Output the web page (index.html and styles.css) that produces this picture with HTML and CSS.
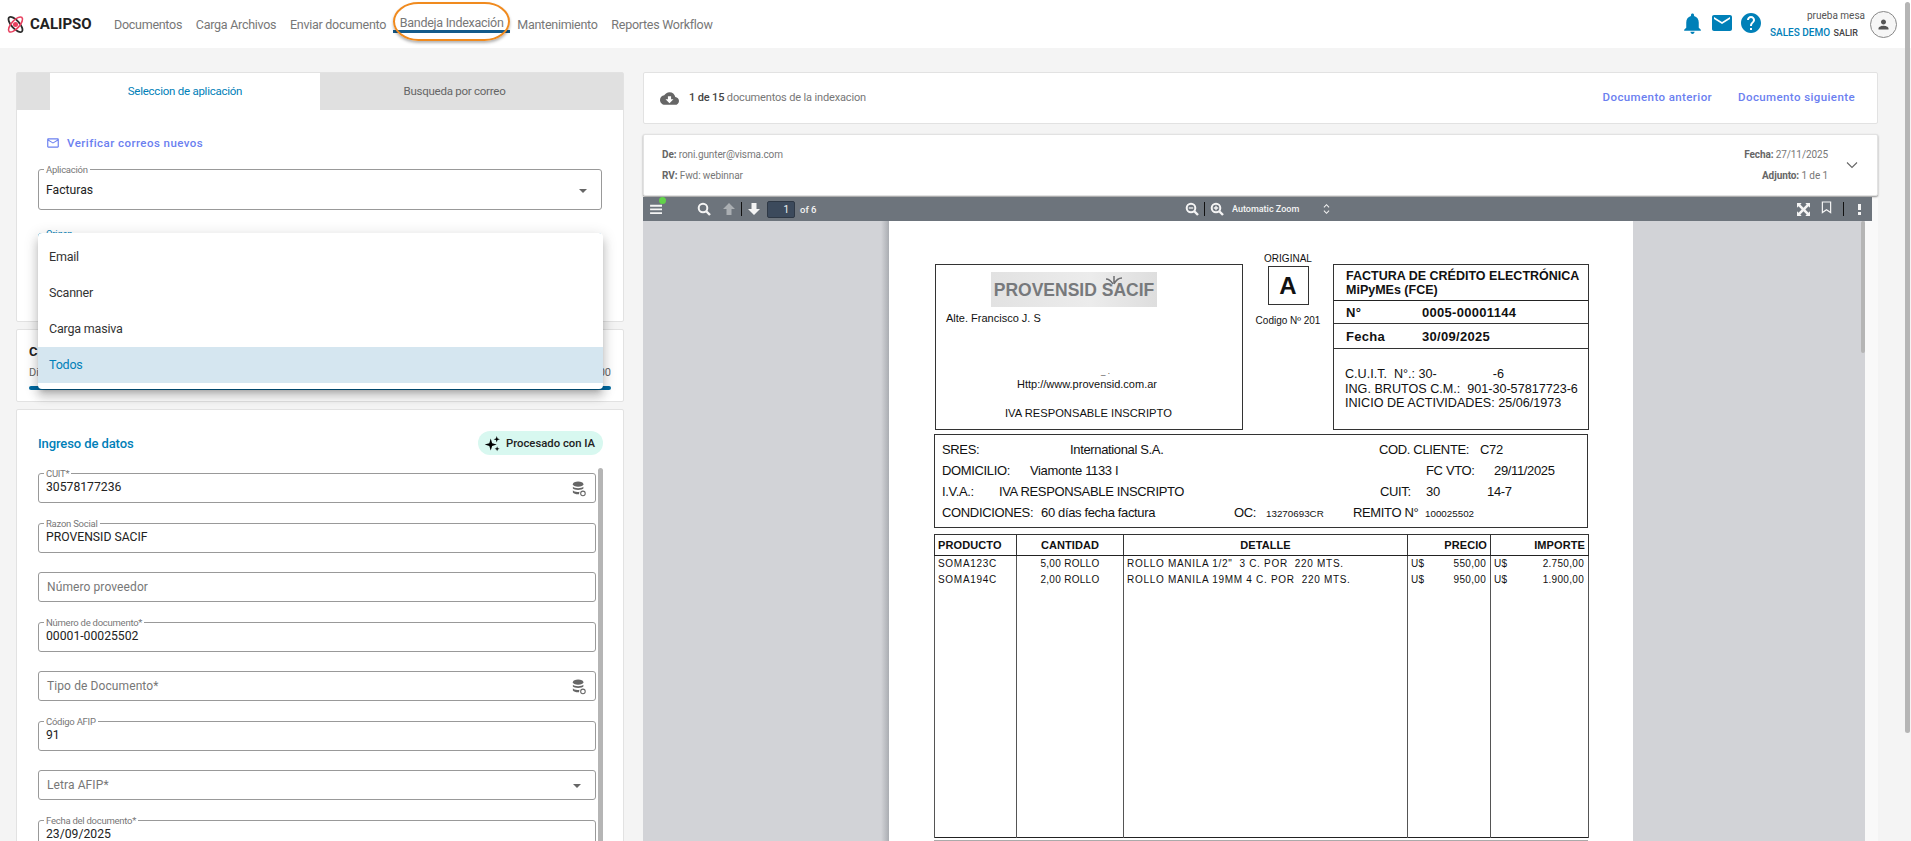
FILE: index.html
```html
<!DOCTYPE html>
<html lang="es">
<head>
  <meta charset="UTF-8" />
  <title>Calipso - Bandeja Indexación</title>
  <link rel="stylesheet" href="styles.css">
</head>
<body>
  <header class="topbar">
    <div class="brand">
      <svg class="brand-icon" viewBox="0 0 24 24" width="19" height="19" fill="none">
        <ellipse cx="12" cy="12" rx="5" ry="12" transform="rotate(-42 12 12)" stroke="#2b2b2b" stroke-width="2.200"/>
        <ellipse cx="12" cy="12" rx="5" ry="12" transform="rotate(42 12 12)" stroke="#e8415f" stroke-width="2"/>
        <circle cx="12" cy="12" r="3.200" fill="#e8415f"/>
      </svg>
      <span class="brand-name">CALIPSO</span>
    </div>
    <nav class="nav">
      <a>Documentos</a>
      <a>Carga Archivos</a>
      <a>Enviar documento</a>
      <a class="active">Bandeja Indexación</a>
      <a>Mantenimiento</a>
      <a>Reportes Workflow</a>
    </nav>
    <div class="top-actions">
      <svg class="top-icon" viewBox="0 0 24 24" width="25" height="25"><path d="M12 22c1.100 0 2-.9 2-2h-4c0 1.100.89 2 2 2zm6-6v-5c0-3.070-1.640-5.640-4.500-6.320V4c0-.83-.67-1.500-1.500-1.500s-1.500.67-1.500 1.500v.68C7.630 5.360 6 7.920 6 11v5l-2 2v1h16v-1l-2-2z"/></svg>
      <svg class="top-icon" viewBox="0 0 24 24" width="24" height="24"><path d="M20 4H4c-1.100 0-1.990.9-1.990 2L2 18c0 1.100.9 2 2 2h16c1.100 0 2-.9 2-2V6c0-1.100-.9-2-2-2zm0 4l-8 5-8-5V6l8 5 8-5v2z"/></svg>
      <svg class="top-icon" viewBox="0 0 24 24" width="24" height="24"><path d="M12 2C6.480 2 2 6.480 2 12s4.480 10 10 10 10-4.480 10-10S17.520 2 12 2zm1 17h-2v-2h2v2zm2.070-7.750l-.9.92C13.450 12.900 13 13.500 13 15h-2v-.5c0-1.100.45-2.100 1.170-2.830l1.240-1.260c.37-.36.59-.86.59-1.410 0-1.100-.9-2-2-2s-2 .9-2 2H8c0-2.210 1.790-4 4-4s4 1.790 4 4c0 .88-.36 1.680-.93 2.250z"/></svg>
      <div class="user">
        <div class="user-name">prueba mesa</div>
        <div class="user-links"><span class="company">SALES DEMO</span><span class="logout">SALIR</span></div>
      </div>
      <div class="avatar">
        <svg viewBox="0 0 24 24" width="15" height="15"><path d="M12 12c2.210 0 4-1.790 4-4s-1.790-4-4-4-4 1.790-4 4 1.790 4 4 4zm0 2c-2.670 0-8 1.340-8 4v2h16v-2c0-2.660-5.330-4-8-4z"/></svg>
      </div>
    </div>
  </header>

  <main class="layout">
    <section class="left">
      <div class="card app-card">
        <div class="tabs">
          <div class="tab-gap"></div>
          <div class="tab active">Seleccion de aplicación</div>
          <div class="tab">Busqueda por correo</div>
        </div>
        <div class="app-body">
          <a class="verify">
            <svg viewBox="0 0 24 24" width="14" height="14"><path d="M22 6c0-1.100-.9-2-2-2H4c-1.100 0-2 .9-2 2v12c0 1.100.9 2 2 2h16c1.100 0 2-.9 2-2V6zm-2 0l-8 5-8-5h16zm0 12H4V8l8 5 8-5v10z"/></svg>
            Verificar correos nuevos
          </a>
          <div class="field tall">
            <span class="field-label">Aplicación</span>
            <span class="value">Facturas</span>
            <i class="caret"></i>
          </div>
          <div class="field tall focus">
            <span class="field-label">Origen</span>
          </div>
        </div>
        <ul class="menu">
          <li>Email</li>
          <li>Scanner</li>
          <li>Carga masiva</li>
          <li class="selected">Todos</li>
        </ul>
      </div>

      <div class="card usage-card">
        <div class="usage-title">C</div>
        <div class="usage-row"><span>Di</span><span>00</span></div>
        <div class="usage-bar"></div>
      </div>

      <div class="card data-card">
        <div class="data-head">
          <h2>Ingreso de datos</h2>
          <div class="pill">
            <svg viewBox="0 0 24 24" width="17" height="17"><path d="M9.500 5l2 6.500 6.500 2-6.500 2-2 6.500-2-6.500-6.500-2 6.500-2zM18 1.500l1.100 3.400 3.400 1.100-3.400 1.100L18 10.500l-1.100-3.400L13.500 6l3.400-1.100zM18.500 16l.9 2.600 2.600.9-2.600.9-.9 2.600-.9-2.600-2.600-.9 2.600-.9z"/></svg>
            Procesado con IA
          </div>
        </div>
        <div class="form-scroll">
          <div class="form">
            <div class="field"><span class="field-label">CUIT*</span><span class="value">30578177236</span>
              <svg class="db" viewBox="0 0 16 18" width="14" height="16"><ellipse cx="7" cy="3.500" rx="6" ry="3"/><path d="M1 6.500c1 2 11 2 12 0v2c-1 2-11 2-12 0zM1 10.500c1 2 6 2.200 7.500 1.500L8 15c-3 .2-6-.5-7-2z"/><circle cx="12.500" cy="14" r="2.600" fill="none" stroke="#666" stroke-width="1.200"/></svg>
            </div>
            <div class="field"><span class="field-label">Razon Social</span><span class="value">PROVENSID SACIF</span></div>
            <div class="field"><span class="placeholder">Número proveedor</span></div>
            <div class="field"><span class="field-label">Número de documento*</span><span class="value">00001-00025502</span></div>
            <div class="field"><span class="placeholder">Tipo de Documento*</span>
              <svg class="db" viewBox="0 0 16 18" width="14" height="16"><ellipse cx="7" cy="3.500" rx="6" ry="3"/><path d="M1 6.500c1 2 11 2 12 0v2c-1 2-11 2-12 0zM1 10.500c1 2 6 2.200 7.500 1.500L8 15c-3 .2-6-.5-7-2z"/><circle cx="12.500" cy="14" r="2.600" fill="none" stroke="#666" stroke-width="1.200"/></svg>
            </div>
            <div class="field"><span class="field-label">Código AFIP</span><span class="value">91</span></div>
            <div class="field"><span class="placeholder">Letra AFIP*</span><i class="caret"></i></div>
            <div class="field"><span class="field-label">Fecha del documento*</span><span class="value">23/09/2025</span></div>
          </div>
          <div class="form-thumb"></div>
        </div>
      </div>
    </section>

    <section class="right">
      <div class="card doc-nav">
        <div class="doc-count">
          <svg viewBox="0 0 24 24" width="19" height="19"><path d="M19.350 10.040C18.670 6.590 15.640 4 12 4 9.110 4 6.600 5.640 5.350 8.040 2.340 8.360 0 10.910 0 14c0 3.310 2.690 6 6 6h13c2.760 0 5-2.240 5-5 0-2.640-2.050-4.780-4.650-4.960zM17 13l-5 5-5-5h3V9h4v4h3z"/></svg>
          <span><b>1 de 15</b> documentos de la indexacion</span>
        </div>
        <div class="doc-links"><a>Documento anterior</a><a>Documento siguiente</a></div>
      </div>

      <div class="card mail-info">
        <div class="mail-col">
          <div><b>De:</b> roni.gunter@visma.com</div>
          <div><b>RV:</b> Fwd: webinnar</div>
        </div>
        <div class="mail-col end">
          <div><b>Fecha:</b> 27/11/2025</div>
          <div><b>Adjunto:</b> 1 de 1</div>
        </div>
        <svg class="chevron" viewBox="0 0 12 8" width="12" height="8"><path d="M1 1.500l5 5 5-5" fill="none" stroke="#666" stroke-width="1.100"/></svg>
      </div>

      <div class="viewer">
        <div class="pdf-toolbar">
          <div class="tb-group tb-left">
            <span class="sidebar-btn">
              <svg viewBox="0 0 14 12" width="13" height="11"><path d="M0 2h13v2H0zM0 6h13v2H0zM0 10h13v2H0z" fill="#f4f4f4"/></svg>
              <i class="dot"></i>
            </span>
            <svg class="tb-search" viewBox="0 0 14 14" width="14" height="14"><circle cx="6" cy="6" r="4.300" fill="none" stroke="#f4f4f4" stroke-width="2"/><path d="M9 9l4 4" stroke="#f4f4f4" stroke-width="2.400"/></svg>
            <svg class="dim" viewBox="0 0 14 14" width="14" height="14"><path d="M7 1l6 6H9.500v6h-5V7H1z" fill="#f4f4f4"/></svg>
            <i class="tb-sep"></i>
            <svg viewBox="0 0 14 14" width="14" height="14"><path d="M7 13l6-6H9.500V1h-5v6H1z" fill="#f4f4f4"/></svg>
            <span class="page-input">1</span>
            <span class="tb-text">of 6</span>
          </div>
          <div class="tb-group tb-center">
            <svg viewBox="0 0 14 14" width="14" height="14"><circle cx="6" cy="6" r="4.300" fill="none" stroke="#f4f4f4" stroke-width="2"/><path d="M9 9l4 4" stroke="#f4f4f4" stroke-width="2.400"/><path d="M3.800 6h4.400" stroke="#f4f4f4" stroke-width="1.300"/></svg>
            <i class="tb-sep"></i>
            <svg viewBox="0 0 14 14" width="14" height="14"><circle cx="6" cy="6" r="4.300" fill="none" stroke="#f4f4f4" stroke-width="2"/><path d="M9 9l4 4" stroke="#f4f4f4" stroke-width="2.400"/><path d="M3.800 6h4.400M6 3.800v4.400" stroke="#f4f4f4" stroke-width="1.300"/></svg>
            <span class="zoom-select">Automatic Zoom</span>
            <svg viewBox="0 0 8 14" width="7" height="12"><path d="M1 5l3-3 3 3M1 9l3 3 3-3" fill="none" stroke="#f4f4f4" stroke-width="1.200"/></svg>
          </div>
          <div class="tb-group tb-right">
            <svg viewBox="0 0 14 14" width="13" height="13"><path d="M0 0h5L3.600 1.600 7 5l3.400-3.400L9 0h5v5l-1.600-1.400L9 7l3.400 3.400L14 9v5H9l1.400-1.600L7 9l-3.400 3.400L5 14H0V9l1.600 1.400L5 7 1.600 3.600 0 5z" fill="#f4f4f4"/></svg>
            <svg class="bookmark" viewBox="0 0 12 14" width="11" height="13"><path d="M1.500 1h9v11.500L6 9.500l-4.500 3z" fill="none" stroke="#f4f4f4" stroke-width="1.300"/></svg>
            <i class="tb-sep"></i>
            <span class="kebab"><i></i><i></i></span>
          </div>
        </div>
        <div class="pdf-area">
          <div class="pdf-page">
            <div class="inv-top">
              <div class="inv-box seller">
                <div class="logo-strip">
                  PROVENSID SACIF
                  <svg class="logo-mark" viewBox="0 0 20 12" width="20" height="12"><path d="M2 4c3 0 5 2 7 5M18 3c-3 0-6 2-8 6M10 8V1" fill="none" stroke="#6e6f72" stroke-width="1.500"/></svg>
                </div>
                <div class="addr">Alte. Francisco J. S</div>
                <div class="web"><span class="cut">_ .</span>Http://www.provensid.com.ar</div>
                <div class="iva">IVA RESPONSABLE INSCRIPTO</div>
              </div>
              <div class="inv-type">
                <div>ORIGINAL</div>
                <div class="letter">A</div>
                <div>Codigo Nº 201</div>
              </div>
              <div class="inv-box doc">
                <div class="doc-title">FACTURA DE CRÉDITO ELECTRÓNICA<br>MiPyMEs (FCE)</div>
                <div class="doc-line num"><span>N°</span><span>0005-00001144</span></div>
                <div class="doc-line date"><span>Fecha</span><span>30/09/2025</span></div>
                <div class="doc-tax">C.U.I.T.&nbsp; N°.: 30-<span class="tax-gap"></span>-6<br>ING. BRUTOS C.M.:&nbsp; 901-30-57817723-6<br>INICIO DE ACTIVIDADES: 25/06/1973</div>
              </div>
            </div>
            <div class="inv-box client">
              <div class="client-row"><span class="c1">SRES:</span><span class="c2">International S.A.</span><span class="c3">COD. CLIENTE:</span><span class="c4">C72</span></div>
              <div class="client-row"><span class="c1">DOMICILIO:</span><span class="c2b">Viamonte 1133 I</span><span class="c3b">FC VTO:</span><span class="c4b">29/11/2025</span></div>
              <div class="client-row"><span class="c1b">I.V.A.:</span><span class="c2c">IVA RESPONSABLE INSCRIPTO</span><span class="c3c">CUIT:</span><span class="c4c">30</span><span class="c5c">14-7</span></div>
              <div class="client-row"><span class="c1d">CONDICIONES:</span><span class="c2d">60 días fecha factura</span><span class="c3d">OC:</span><span class="small c4d">13270693CR</span><span class="c5d">REMITO N°</span><span class="small">100025502</span></div>
            </div>
            <table class="items">
              <colgroup><col class="w1"><col class="w2"><col class="w3"><col class="w4"><col class="w5"></colgroup>
              <thead>
                <tr><th class="l">PRODUCTO</th><th>CANTIDAD</th><th>DETALLE</th><th class="r">PRECIO</th><th class="r">IMPORTE</th></tr>
              </thead>
              <tbody>
                <tr><td>SOMA123C</td><td class="ctr">5,00 ROLLO</td><td class="det">ROLLO MANILA 1/2"&nbsp; 3 C. POR&nbsp; 220 MTS.</td><td><div class="money"><span>U$</span><span>550,00</span></div></td><td><div class="money"><span>U$</span><span>2.750,00</span></div></td></tr>
                <tr><td>SOMA194C</td><td class="ctr">2,00 ROLLO</td><td class="det">ROLLO MANILA 19MM 4 C. POR&nbsp; 220 MTS.</td><td><div class="money"><span>U$</span><span>950,00</span></div></td><td><div class="money"><span>U$</span><span>1.900,00</span></div></td></tr>
                <tr class="filler"><td></td><td></td><td></td><td></td><td></td></tr>
              </tbody>
            </table>
            <div class="next-rule"></div>
          </div>
          <div class="pdf-scroll"><div class="pdf-thumb"></div></div>
        </div>
      </div>
    </section>
  </main>

  <div class="page-thumb"></div>
  <div class="highlight"></div>
</body>
</html>
```

FILE: styles.css
```css
* {
  box-sizing: border-box;
}

html, body {
  margin: 0;
  height: 841px;
  overflow: hidden;
}

body {
  background: #f4f4f4;
  font-family: Roboto, sans-serif;
  color: #333;
  position: relative;
}

/* top bar */
.topbar {
  height: 48px;
  background: #fff;
  display: flex;
  align-items: center;
  padding: 0 14px 0 6px;
}

.brand {
  display: flex;
  align-items: center;
  gap: 5px;
  width: 108px;
}

.brand-name {
  font-weight: 700;
  font-size: 15px;
  color: #222;
}

.nav {
  display: flex;
  gap: 13.7px;
  font-size: 12.5px;
  letter-spacing: -0.27px;
  color: #777;
  height: 48px;
  align-items: center;
}

.nav a.active {
  position: relative;
  top: -2px;
}

.nav a.active::after {
  content: "";
  position: absolute;
  left: -7px;
  right: -6px;
  top: 15px;
  height: 3px;
  background: #145a8a;
}

.top-actions {
  margin-left: auto;
  display: flex;
  align-items: center;
}

.top-icon {
  fill: #0080b8;
  margin-right: 5px;
  position: relative;
  top: -1px;
}

.user {
  width: 95px;
  text-align: right;
  margin-left: 2px;
}

.user-name {
  font-size: 10px;
  color: #555;
  line-height: 14px;
  margin-bottom: 3px;
}

.user-links {
  display: flex;
  justify-content: space-between;
  align-items: center;
  padding-right: 7px;
  line-height: 14px;
  white-space: nowrap;
}

.company {
  font-size: 10px;
  font-weight: 500;
  color: #0080b8;
}

.logout {
  font-size: 9px;
  font-weight: 500;
  color: #444;
}

.avatar {
  width: 27px;
  height: 27px;
  border-radius: 50%;
  border: 1px solid #888;
  background: #f6f6f6;
  margin-left: 5px;
  display: flex;
  align-items: center;
  justify-content: center;
}

.avatar svg {
  fill: #555;
}

/* orange annotation over the active menu entry */
.highlight {
  position: absolute;
  left: 393px;
  top: 2px;
  width: 117px;
  height: 39px;
  border: 2px solid #f08a1e;
  border-radius: 26px / 20px;
  box-shadow: 0 2px 3px rgba(0,0,0,0.3);
}

.page-thumb {
  position: absolute;
  left: 1905px;
  top: 2px;
  width: 5px;
  height: 731px;
  background: #b5b5b5;
  border-radius: 3px;
}

/* layout */
.layout {
  display: flex;
  gap: 19px;
  padding: 24px 33px 0 16px;
}

.left {
  width: 608px;
  display: flex;
  flex-direction: column;
  gap: 7px;
}

.right {
  flex: 1;
  min-width: 0;
}

.card {
  background: #fff;
  border: 1px solid #e2e2e2;
  border-radius: 2px;
}

/* application card */
.app-card {
  height: 250px;
  position: relative;
}

.tabs {
  display: flex;
  height: 37px;
  background: #e0e0e0;
  font-size: 11.5px;
  letter-spacing: -0.25px;
  color: #666;
}

.tab-gap {
  width: 33px;
}

.tab {
  flex: 1;
  display: flex;
  align-items: center;
  justify-content: center;
  padding: 0 34px 1px 0;
}

.tab.active {
  background: #fff;
  color: #0080b8;
  width: 270px;
  flex: none;
  padding-right: 0;
}

.app-body {
  padding: 26px 21px 0;
}

.verify {
  display: flex;
  align-items: center;
  gap: 5px;
  padding-left: 8px;
  font-size: 11.5px;
  font-weight: 500;
  letter-spacing: 0.45px;
  color: #6b80f0;
  height: 14px;
  margin-bottom: 19px;
}

.verify svg {
  fill: #6b80f0;
  margin-right: 2px;
}

.field {
  position: relative;
  height: 30px;
  border: 1px solid #999;
  border-radius: 3px;
  display: flex;
  align-items: center;
  padding: 0 7px 2px;
  font-size: 12.2px;
}

.field.tall {
  height: 41px;
  margin-bottom: 23px;
  padding-bottom: 0;
}

.field.focus {
  border-color: #0080b8;
}

.field-label {
  position: absolute;
  left: 5px;
  top: -6px;
  background: #fff;
  padding: 0 2px;
  font-size: 9.5px;
  letter-spacing: -0.25px;
  line-height: 11px;
  color: #777;
}

.field.focus .field-label {
  color: #0080b8;
}

.value {
  color: #222;
}

.placeholder {
  font-size: 12px;
  letter-spacing: 0.1px;
  margin: 2px 0 0 1px;
  color: #777;
}

.caret {
  position: absolute;
  right: 14px;
  top: 50%;
  margin-top: -1px;
  border-left: 4px solid transparent;
  border-right: 4px solid transparent;
  border-top: 4px solid #666;
}

/* dropdown opened over the cards */
.menu {
  position: absolute;
  z-index: 5;
  left: 21px;
  top: 160px;
  width: 565px;
  height: 156px;
  margin: 0;
  padding: 6px 0;
  list-style: none;
  background: #fff;
  border-radius: 4px;
  font-size: 12.5px;
  letter-spacing: -0.2px;
  color: #333;
  box-shadow: 0 5px 5px -3px rgba(0,0,0,.2), 0 8px 10px 1px rgba(0,0,0,.14), 0 3px 14px 2px rgba(0,0,0,.12);
}

.menu li {
  height: 36px;
  line-height: 36px;
  padding-left: 11px;
}

.menu li.selected {
  background: #d5e6f0;
  color: #0080b8;
}

/* usage card */
.usage-card {
  height: 73px;
  padding: 14px 12px 0;
}

.usage-title {
  font-size: 13px;
  font-weight: 700;
  color: #222;
  line-height: 16px;
}

.usage-row {
  display: flex;
  justify-content: space-between;
  font-size: 11px;
  color: #666;
  margin-top: 6px;
  line-height: 14px;
}

.usage-bar {
  height: 4px;
  border-radius: 2px;
  background: #0069a0;
  margin-top: 6px;
}

/* data form */
.data-card {
  height: 440px;
  padding: 21px 20px 0 21px;
}

.data-head {
  display: flex;
  justify-content: space-between;
  align-items: center;
  height: 24px;
}

.data-head h2 {
  margin: 0;
  font-size: 13px;
  font-weight: 500;
  letter-spacing: -0.1px;
  color: #0080b8;
}

.pill {
  height: 24px;
  width: 125px;
  border-radius: 12px;
  background: #d8f8f0;
  display: flex;
  align-items: center;
  gap: 5px;
  padding-left: 6px;
  font-size: 11.3px;
  font-weight: 500;
  color: #222;
}

.form-scroll {
  display: flex;
  margin-top: 13px;
  gap: 2px;
}

.form {
  width: 558px;
  flex: none;
  padding-top: 5px;
  display: flex;
  flex-direction: column;
  gap: 19.5px;
}

.form-thumb {
  width: 5px;
  height: 373px;
  background: #b5b5b5;
  border-radius: 3px 3px 0 0;
}

.db {
  position: absolute;
  right: 9px;
  top: 7px;
  fill: #666;
}

/* right column */
.doc-nav {
  height: 52px;
  display: flex;
  justify-content: space-between;
  align-items: flex-start;
  padding: 15px 22px 0 16px;
}

.doc-count {
  display: flex;
  align-items: center;
  gap: 10px;
  font-size: 11px;
  letter-spacing: -0.15px;
  color: #777;
}

.doc-count svg {
  fill: #666;
  position: relative;
  top: 1px;
}

.doc-count b {
  font-weight: 500;
  color: #444;
}

.doc-links {
  display: flex;
  gap: 26px;
  font-size: 11.5px;
  font-weight: 500;
  letter-spacing: 0.4px;
  color: #6b80f0;
  padding-top: 2px;
}

.mail-info {
  height: 62px;
  margin-top: 10px;
  display: flex;
  align-items: center;
  padding: 0 19px 0 18px;
  font-size: 10px;
  letter-spacing: -0.1px;
  color: #777;
  box-shadow: 0 1px 2px rgba(0,0,0,.4);
  position: relative;
}

.mail-info b {
  font-weight: 700;
  color: #666;
}

.mail-col {
  display: flex;
  flex-direction: column;
  gap: 9px;
  line-height: 12px;
}

.mail-col.end {
  margin-left: auto;
  align-items: flex-end;
  margin-right: 18px;
}

/* pdf viewer */
.viewer {
  margin-top: 1px;
  width: 1235px;
  background: #f9f9f9;
}

.pdf-toolbar {
  height: 24px;
  width: 1229px;
  background: #6d747c;
  display: flex;
  align-items: center;
  position: relative;
  color: #f4f4f4;
}

.tb-group {
  display: flex;
  align-items: center;
  gap: 5px;
}

.tb-left {
  padding-left: 7px;
}

.sidebar-btn {
  position: relative;
  width: 13px;
  height: 12px;
  margin-right: 29px;
}

.sidebar-btn svg {
  display: block;
}

.dot {
  position: absolute;
  right: -3px;
  top: -6px;
  width: 7px;
  height: 7px;
  border-radius: 50%;
  background: #62d24a;
}

.tb-search {
  margin-right: 6px;
}

.dim {
  opacity: 0.45;
}

.tb-sep {
  display: block;
  width: 1px;
  height: 14px;
  background: #111;
}

.page-input {
  width: 28px;
  height: 17px;
  margin-left: 1px;
  background: #3c4a5c;
  border: 1px solid #2e3845;
  border-radius: 2px;
  font-size: 10px;
  line-height: 15px;
  text-align: right;
  padding-right: 5px;
}

.tb-text {
  font-size: 9.5px;
  font-weight: 500;
}

.tb-center {
  position: absolute;
  left: 542px;
}

.zoom-select {
  font-size: 9px;
  font-weight: 500;
  margin-left: 3px;
  margin-right: 19px;
}

.tb-right {
  margin-left: auto;
  padding-right: 11px;
  gap: 11px;
}

.bookmark {
  position: relative;
  top: -2px;
}

.kebab {
  display: flex;
  flex-direction: column;
  gap: 2px;
  margin-left: 3px;
}

.kebab i {
  display: block;
  width: 3px;
  background: #f4f4f4;
  height: 3px;
}

.kebab i:first-child {
  height: 6px;
}

.pdf-area {
  display: flex;
  height: 620px;
}

.pdf-page {
  width: 990px;
  padding: 43px 0 0 292px;
  background: linear-gradient(90deg, #d2d3d7 0, #d2d3d7 238px, #aaadb2 246px, #fff 246px, #fff 990px);
  position: relative;
  font-family: "Liberation Sans", Arial, sans-serif;
  color: #111;
}

.pdf-scroll {
  width: 232px;
  background: #d2d3d7;
  position: relative;
}

.pdf-thumb {
  position: absolute;
  right: 0;
  top: 0;
  width: 4px;
  height: 132px;
  background: #b5b5b5;
  border-radius: 2px;
}

/* invoice */
.inv-top {
  display: flex;
  height: 166px;
  width: 654px;
}

.inv-box {
  border: 1px solid #333;
}

.seller {
  width: 308px;
  padding: 7px 0 0 10px;
  font-size: 11px;
}

.logo-strip {
  position: relative;
  width: 166px;
  height: 35px;
  margin-left: 45px;
  background: linear-gradient(90deg, #e2e2e2, #ececec 60%, #dedede);
  color: #77797c;
  font-weight: 700;
  font-size: 17.5px;
  line-height: 37px;
  text-align: center;
  white-space: nowrap;
}

.logo-mark {
  position: absolute;
  left: 113px;
  top: 3px;
}

.addr {
  margin-top: 5px;
  line-height: 13px;
}

.web {
  position: relative;
  margin-top: 53px;
  margin-left: 71px;
  font-size: 11px;
  line-height: 13px;
}

.cut {
  position: absolute;
  left: 84px;
  top: -11px;
  font-size: 8px;
  line-height: 9px;
}

.iva {
  margin-top: 16px;
  margin-left: 59px;
  font-size: 11.2px;
  line-height: 13px;
}

.inv-type {
  width: 90px;
  display: flex;
  flex-direction: column;
  align-items: center;
  font-size: 10px;
  margin-top: -11px;
  line-height: 11px;
}

.letter {
  width: 41px;
  height: 39px;
  border: 1px solid #333;
  margin: 2px 0 10px;
  font-size: 24px;
  font-weight: 700;
  line-height: 37px;
  text-align: center;
}

.doc {
  width: 256px;
  font-size: 12.5px;
}

.doc-title {
  height: 36px;
  padding: 4px 0 0 12px;
  font-weight: 700;
  line-height: 14px;
  border-bottom: 1px solid #222;
  white-space: nowrap;
}

.doc-line {
  display: flex;
  font-weight: 700;
  font-size: 13px;
  letter-spacing: 0.3px;
  padding-left: 12px;
  align-items: center;
  border-bottom: 1px solid #333;
}

.doc-line span:first-child {
  width: 76px;
}

.doc-line.num {
  height: 23px;
}

.doc-line.date {
  height: 25px;
}

.doc-tax {
  padding: 18px 0 0 11px;
  line-height: 14.5px;
  font-size: 12.6px;
  white-space: nowrap;
}

.tax-gap {
  display: inline-block;
  width: 56px;
}

.client {
  width: 654px;
  height: 94px;
  margin: 4px 0 0 -1px;
  padding: 4px 0 0 7px;
  font-size: 13px;
  letter-spacing: -0.35px;
  white-space: nowrap;
}

.client-row {
  display: flex;
  align-items: baseline;
  height: 21px;
  line-height: 21px;
}

.small {
  font-size: 9.8px;
  letter-spacing: 0;
}

.c1 { width: 128px; }
.c2 { width: 309px; }
.c3 { width: 101px; }
.c2b { width: 396px; margin-left: -40px; }
.c3b { width: 68px; }
.c1b { width: 57px; }
.c2c { width: 381px; }
.c3c { width: 46px; }
.c4c { width: 61px; }
.c1d { width: 99px; }
.c2d { width: 193px; }
.c3d { width: 32px; }
.c4d { width: 87px; }
.c5d { width: 72px; }

.items {
  width: 654px;
  height: 304px;
  margin: 6px 0 0 -1px;
  border-collapse: collapse;
  table-layout: fixed;
  border: 1px solid #222;
  font-size: 10px;
  letter-spacing: 0.7px;
}

.w1 { width: 82px; }
.w2 { width: 107px; }
.w3 { width: 284px; }
.w4 { width: 83px; }
.w5 { width: 98px; }

.items th {
  height: 21px;
  font-size: 11px;
  letter-spacing: 0.1px;
  padding: 0 3px;
  border: 1px solid #333;
  border-bottom-color: #222;
}

.items th.l {
  text-align: left;
}

.items th.r {
  text-align: right;
}

.items td {
  height: 16px;
  padding: 0 3px;
  border-left: 1px solid #555;
  border-right: 1px solid #555;
  white-space: nowrap;
}

.items td.ctr {
  text-align: center;
  letter-spacing: 0.3px;
}

.items td.det {
  padding-left: 3px;
}

.items tr.filler td {
  height: auto;
}

.money {
  display: flex;
  justify-content: space-between;
  letter-spacing: 0.3px;
  padding-right: 1px;
}

.next-rule {
  width: 654px;
  height: 1px;
  background: #aaa;
  margin: 2px 0 0 -1px;
}
```
